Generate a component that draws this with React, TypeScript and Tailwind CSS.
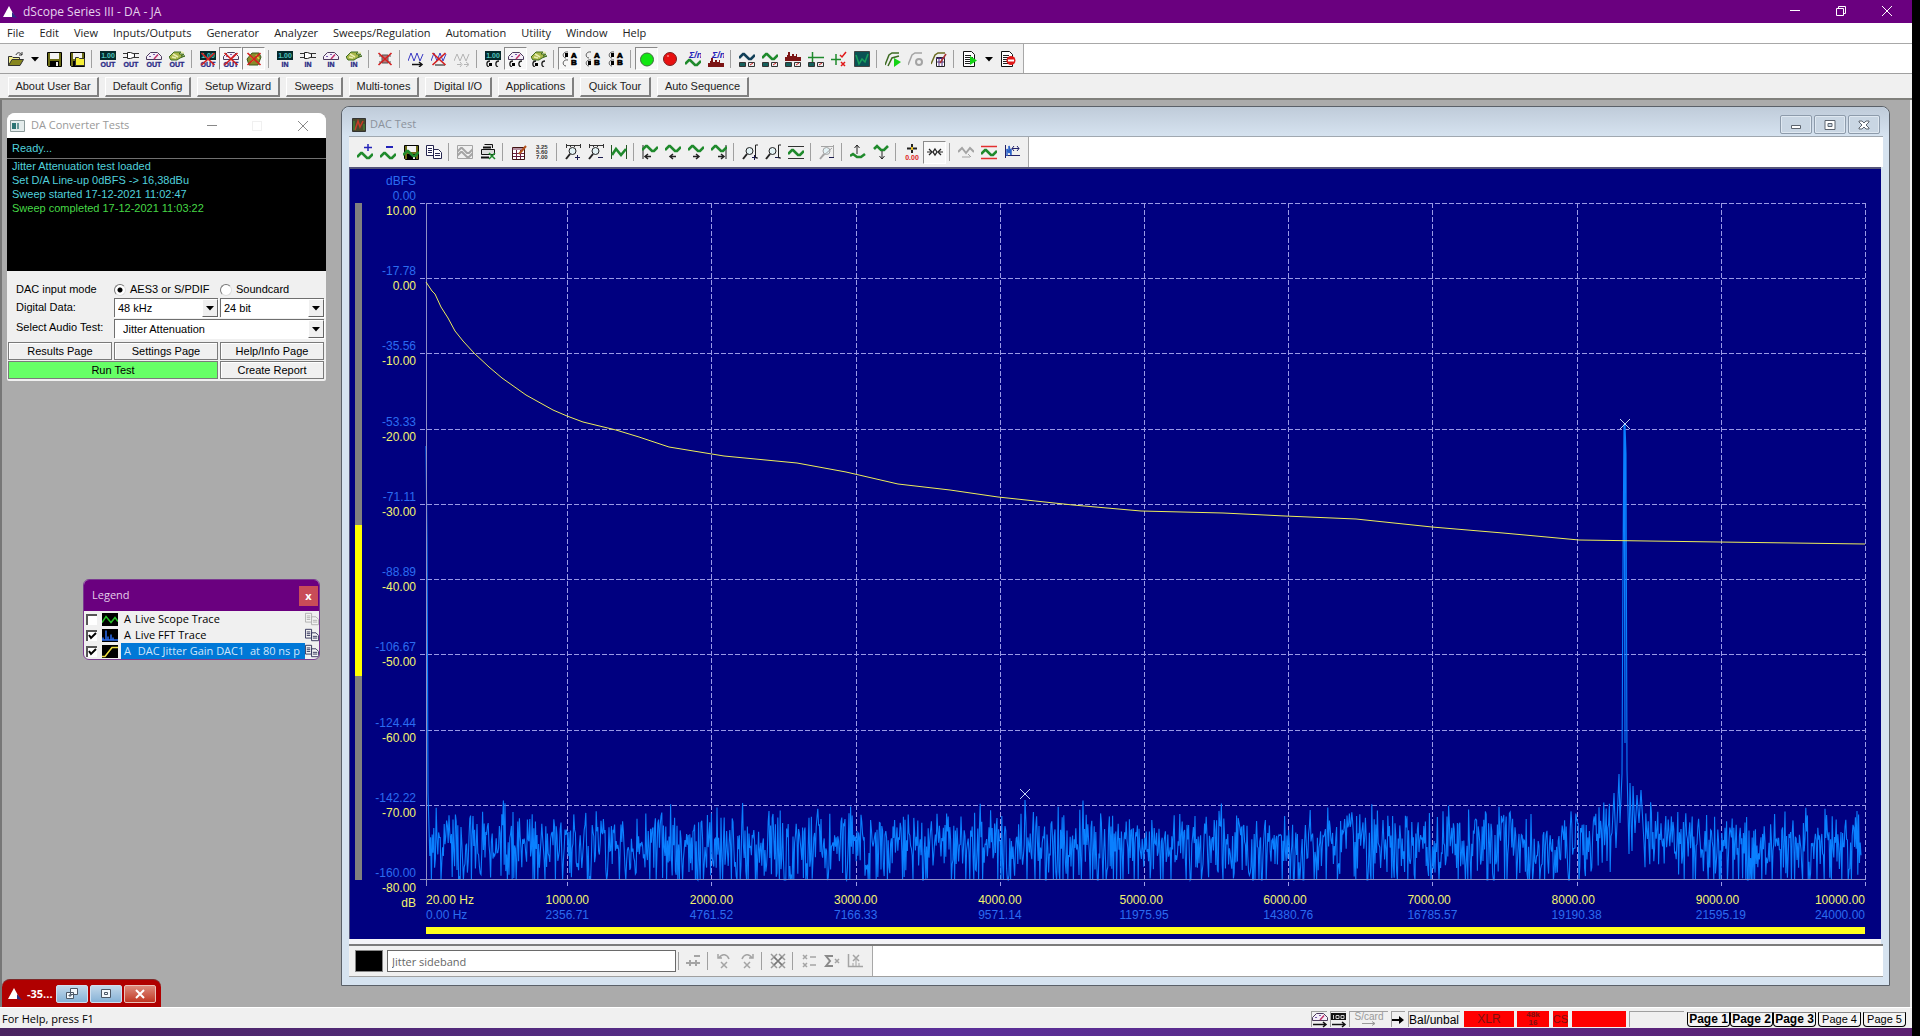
import type { ReactNode } from "react";
import clsx from "clsx";

type Tool = { label: string; icon: ReactNode; pressed?: boolean; narrow?: boolean };

const GREEN = "#1f8a2c";
const GREY = "#a4a4a4";

/* ---------- icon parts, all drawn on a 16 x 16 grid ---------- */

function Icon({ children }: { children: ReactNode }) {
  return (
    <svg viewBox="0 0 16 16" className="size-4 shrink-0" fill="none" aria-hidden="true">
      {children}
    </svg>
  );
}

function Wave({ y = 0, color = GREEN, width = 2.6 }: { y?: number; color?: string; width?: number }) {
  return <path d={`M0 ${10 + y}L4 ${6 + y}H5L10 ${11 + y}H12L16 ${7 + y}`} stroke={color} strokeWidth={width} />;
}

function Caption({ text }: { text: string }) {
  return (
    <text x="8" y="16" textAnchor="middle" fontSize="7" fontWeight="700" fontFamily="Liberation Sans" fill="#2a2a86" stroke="#2a2a86" strokeWidth=".3">
      {text}
    </text>
  );
}

function Display() {
  return (
    <>
      <path d="M0 0H16V9H0Z" fill="#04282a" />
      <text x="8" y="7" textAnchor="middle" fontSize="7" fontWeight="700" fontFamily="Liberation Sans" fill="#4fc4bd">
        1.00
      </text>
    </>
  );
}

function Plug() {
  return (
    <>
      <path d="M0 2.5H5M0 6.5H5M11 2.5H16M11 6.5H16" stroke="#333" />
      <path d="M4.5 1.5H7.5L11.5 3V6L7.5 7.5H4.5Z" fill="#fff" stroke="#222" />
    </>
  );
}

function Gauge() {
  return (
    <>
      <path d="M.5 8.5V5.5L4.5 1.5H11.5L15.5 5.5V8.5Z" fill="#f4eef8" stroke="#4b3a5c" />
      <path d="M8 8L12 3.5" stroke="#c0306a" strokeWidth="1.5" />
      <path d="M3 5.5H5M7 3.5H9" stroke="#7a5cb0" />
    </>
  );
}

function Speaker() {
  return (
    <>
      <path d="M0 6L5 1H12L10 3H15L12 5H16L11 7L8 9L2 9Z" fill="#a9b84a" stroke="#3d6a1e" />
      <path d="M4 3L9 6M3 6L7 7M12 1L15 2" stroke="#e8ecb0" strokeWidth="1.5" />
    </>
  );
}

function RedCross() {
  return <path d="M1.5 2L14.5 14M14.5 2L1.5 14" stroke="#d42020" strokeWidth="1.7" />;
}

function RadioPair() {
  return (
    <>
      <path d="M5 10C1 10 1 15 4 16M14 10C10 10 10 15 13 16" stroke="#222" strokeWidth="1.3" />
      <path d="M4 12H7V15H4Z" fill="#000" />
    </>
  );
}

function ChannelPick({ a, b }: { a: boolean; b: boolean }) {
  return (
    <>
      <path d="M6 1C0 0 0 7 4 7M6 9C0 8 0 15 4 15" stroke="#555" />
      {a && <path d="M3 2H6V6H3Z" fill="#000" />}
      {b && <path d="M3 10H6V14H3Z" fill="#000" />}
      <g fontSize="8" fontWeight="700" fontFamily="Liberation Sans" fill="#000" stroke="#000" strokeWidth=".7">
        <text x="9" y="7">A</text>
        <text x="9" y="14">B</text>
      </g>
    </>
  );
}

function SumN() {
  return (
    <text x="4" y="7" fontSize="9" fontWeight="700" fontStyle="italic" fontFamily="Liberation Sans" fill="#2222b8">
      Σ/n
    </text>
  );
}

function Spectrum({ y = 0 }: { y?: number }) {
  return (
    <path
      d={`M0 ${10 + y}V${6 + y}H2V${4 + y}H3V${1 + y}H5V${5 + y}H7V${3 + y}H9V${5 + y}H11V${3 + y}H12V${6 + y}H16V${10 + y}Z`}
      fill="#7c1414"
    />
  );
}

function Readouts() {
  return (
    <>
      <path d="M.5 11.5H6.5V15.5H.5Z" fill="#15605c" stroke="#333" />
      <path d="M9.5 11.5H15.5V15.5H9.5Z" fill="#eee" stroke="#333" />
      <path d="M11 14L14 12" stroke="#c22" />
    </>
  );
}

function Folder() {
  return (
    <>
      <path d="M.5 14.5V5.5H4L5 6.5H11.5V8.5" fill="#f1ee8e" stroke="#333" />
      <path d="M.5 14.5L4 8.5H15.5L12 14.5Z" fill="#87871f" stroke="#333" />
    </>
  );
}

function Floppy() {
  return (
    <>
      <path d="M1.5 1.5H15.5V15.5H2.5L1.5 14.5Z" fill="#6c6c16" stroke="#000" />
      <path d="M4 2H13V8H4Z" fill="#f4f4f4" />
      <path d="M4 10H13V15H4Z" fill="#000" />
      <path d="M10 11H12V15H10Z" fill="#eee" />
    </>
  );
}

function Sheet() {
  return (
    <>
      <path d="M1.5 .5H9.5L12.5 3.5V15.5H1.5Z" fill="#fff" stroke="#111" />
      <path d="M3 4.5H9M3 6.5H11M3 8.5H11M3 10.5H9M3 12.5H8" stroke="#222" />
    </>
  );
}

function Copy({ color = "#26264f", paper = "#fff" }: { color?: string; paper?: string }) {
  return (
    <>
      <path d="M.5 1.5H7.5V11.5H.5Z" fill={paper} stroke={color} />
      <path d="M7.5 5.5H12.5L15.5 8.5V14.5H7.5Z" fill={paper} stroke={color} />
      <path d="M2 4.5H6M2 6.5H6M2 8.5H6M9 9.5H14M9 11.5H14" stroke={color} />
    </>
  );
}

function Lens({ sign, color = "#222" }: { sign: "+" | "-"; color?: string }) {
  return (
    <>
      <circle cx="7.5" cy="7" r="3.5" fill="#e3f2f5" stroke={color} />
      <path d="M5 10L1 15" stroke={color} strokeWidth="2" />
      <path d={sign === "+" ? "M10 13.5H15M12.5 11V16" : "M10 13.5H15"} stroke="#1a1a4e" />
    </>
  );
}

function Arrow({ x, dir }: { x: number; dir: 1 | -1 }) {
  return (
    <path d={`M${x - 3 * dir} 12.5H${x + 3 * dir}M${x} 10L${x + 3 * dir} 12.5L${x} 15`} stroke="#222" strokeWidth="1.5" />
  );
}

function Cross({ x, y, s = 3, color = GREY }: { x: number; y: number; s?: number; color?: string }) {
  return <path d={`M${x - s} ${y - s}L${x + s} ${y + s}M${x + s} ${y - s}L${x - s} ${y + s}`} stroke={color} strokeWidth="1.5" />;
}

function Logo() {
  return (
    <svg viewBox="0 0 16 16" className="size-4 shrink-0" aria-hidden="true">
      <path d="M7 2L13 13H1Z" fill="#fff" />
      <path d="M10 8L15 14L10 13Z" fill="#2c2c86" />
    </svg>
  );
}

/* ---------- toolbars ---------- */

const mainTools: (Tool | null)[] = [
  { label: "Open", icon: <><Folder /><path d="M8 4C9 1 12 1 14 4M14 1V4H11" stroke="#333" /></> },
  { label: "Open recent", narrow: true, icon: <path d="M4 6H12L8 10.5Z" fill="#000" /> },
  { label: "Save", icon: <Floppy /> },
  { label: "Save as", icon: <><Floppy /><path d="M6.5 14.5V6.5H9.5L10.5 7.5H15.5V14.5Z" fill="#f5ee38" stroke="#333" /></> },
  null,
  { label: "Signal generator", icon: <><Display /><Caption text="OUT" /></> },
  { label: "Digital outputs", icon: <><Plug /><Caption text="OUT" /></> },
  { label: "Analogue outputs", icon: <><Gauge /><Caption text="OUT" /></> },
  { label: "Monitor outputs", icon: <><Speaker /><Caption text="OUT" /></> },
  null,
  { label: "Mute generator", icon: <><Display /><Caption text="OUT" /><RedCross /></> },
  { label: "Mute analogue outputs", pressed: true, icon: <><Gauge /><Caption text="OUT" /><RedCross /></> },
  { label: "Mute monitor", pressed: true, icon: <><path d="M1 8L6 2H13L15 6L12 14H3Z" fill="#8a8a2a" stroke="#3d5a1e" /><path d="M4 5L8 8L5 11M10 4L13 8" stroke="#e8d040" strokeWidth="1.5" /><RedCross /></> },
  null,
  { label: "Signal analyzer", icon: <><Display /><Caption text="IN" /></> },
  { label: "Digital inputs", icon: <><Plug /><Caption text="IN" /></> },
  { label: "Analogue inputs", icon: <><Gauge /><Caption text="IN" /></> },
  { label: "Monitor inputs", icon: <><Speaker /><Caption text="IN" /></> },
  null,
  { label: "Disconnect", icon: <><path d="M2 5H5M2 11H5M11 5H14M11 11H14" stroke="#555" /><path d="M5 4H11V12H5Z" fill="#b87878" stroke="#555" /><RedCross /></> },
  null,
  { label: "Sweep on", icon: <><path d="M0 10L3 2L6 10L9 2L12 10L15 3" stroke="#3a3ac4" /><path d="M4 13.5H14M11 11L14 13.5L11 16" stroke="#111" strokeWidth="1.5" /></> },
  { label: "Sweep off", icon: <><path d="M0 10L3 2L6 10L9 2L12 10L15 3" stroke="#3a3ac4" /><path d="M4 14H14" stroke="#111" /><RedCross /></> },
  { label: "Step sweep", icon: <path d="M0 10L3 3L6 10L9 3L12 10L15 3M3 13.5H7M10 13.5H14M6 11L8 13.5L6 16M12 11L15 13.5L12 16" stroke="#b4b4b4" /> },
  null,
  { label: "Generator source", icon: <><Display /><RadioPair /></> },
  { label: "Analogue source", pressed: true, icon: <><Gauge /><RadioPair /></> },
  { label: "Monitor source", icon: <><Speaker /><RadioPair /></> },
  null,
  { label: "Channel A", pressed: true, icon: <ChannelPick a b={false} /> },
  { label: "Channel B", icon: <ChannelPick a={false} b /> },
  { label: "Channels A and B", icon: <ChannelPick a b /> },
  null,
  { label: "Run", pressed: true, icon: <circle cx="8" cy="8.5" r="6.5" fill="#12e712" stroke="#3c6e3c" /> },
  { label: "Stop", icon: <><circle cx="8" cy="8" r="6.5" fill="#e81010" stroke="#7b2020" /><path d="M5 5H7" stroke="#fbb" /></> },
  { label: "Average scope", icon: <><SumN /><Wave y={3} /></> },
  { label: "Average FFT", icon: <><SumN /><Spectrum y={6} /></> },
  null,
  { label: "Continuous-time detector", icon: <><Wave y={-3} color="#123f58" /><Readouts /></> },
  { label: "Scope detector", icon: <><Wave y={-3} /><Readouts /></> },
  { label: "FFT detector", icon: <><Spectrum /><Readouts /></> },
  { label: "Impulse response", icon: <><path d="M0 6.5H16M4.5 1V11" stroke={GREEN} strokeWidth="1.5" /><Readouts /></> },
  { label: "Limit checks", icon: <><path d="M0 8.5H10M5 3V14" stroke={GREEN} strokeWidth="1.5" /><path d="M9 4L11 6L15 1" stroke="#e01818" strokeWidth="1.5" /><Cross x={12} y={13} s={2} color="#e01818" /></> },
  { label: "Graph", icon: <><path d="M.5 .5H15.5V15.5H.5Z" fill="#0a5254" stroke="#444" /><path d="M2 4L5 13L8 8L11 11L14 3" stroke="#19a05c" strokeWidth="1.5" /></> },
  null,
  { label: "Run script", icon: <><path d="M0 14L4 4L7 2H14M3 15L7 7L14 5" stroke="#3d6b22" strokeWidth="1.5" /><path d="M9 7L16 11L9 16Z" fill="#14d314" /></> },
  { label: "Record script", icon: <><path d="M0 14L4 4L7 2H14" stroke={GREY} strokeWidth="1.5" /><circle cx="11" cy="11" r="3" stroke={GREY} strokeWidth="2" /></> },
  { label: "Edit script", icon: <><path d="M0 13L4 4L7 2H14" stroke="#6b6b22" strokeWidth="1.5" /><path d="M5.5 6.5H13.5V15.5H5.5Z" fill="#fff" stroke="#222" /><path d="M5 7.5H14M8 6V15M11 6V15M6 11H13" stroke="#4a2a7a" /><path d="M9 12L15 3" stroke="#a33" strokeWidth="1.5" /></> },
  null,
  { label: "Run report", icon: <><Sheet /><path d="M8 5L15 9.5L8 14Z" fill="#14d314" /></> },
  { label: "Recent reports", narrow: true, icon: <path d="M4 6H12L8 10.5Z" fill="#000" /> },
  { label: "Stop report", icon: <><Sheet /><circle cx="11" cy="9.5" r="4.5" fill="#e01818" /><path d="M8 9.5H14" stroke="#fff" strokeWidth="2" /></> },
];

const graphTools: (Tool | null)[] = [
  { label: "Add trace", icon: <><Wave y={3} /><path d="M7 3.5H15M11 0V7" stroke="#2222b8" strokeWidth="1.5" /></> },
  { label: "Remove trace", icon: <><Wave y={3} /><path d="M6 3H13" stroke="#2222b8" strokeWidth="2" /></> },
  { label: "Save trace", icon: <><Floppy /><Wave y={1} /></> },
  { label: "Copy graph", icon: <Copy /> },
  null,
  { label: "Trace style", icon: <><path d="M.5 1.5H15.5V14.5H.5Z" stroke={GREY} /><Wave y={-2} color={GREY} width={2} /><Wave y={2} color={GREY} width={2} /></> },
  { label: "Print graph", icon: <><path d="M4.5 .5H12.5V4M1.5 5.5H14.5V10.5H1.5Z" fill="#ddd" stroke="#111" /><path d="M3 3.5H11M1 13.5H9" stroke="#111" strokeWidth="2" /><Cross x={12} y={12} color={GREEN} /></> },
  null,
  { label: "Trace settings", icon: <><path d="M1.5 3.5H13.5V15.5H1.5Z" fill="#fff" stroke="#401414" /><path d="M1 5H14M5.5 6V15M9.5 6V15M2 9.5H13M2 12.5H13" stroke="#6a2040" /><path d="M8 10L15 2" stroke="#b4541e" strokeWidth="2" /></> },
  { label: "Values", icon: <g fontSize="6" fontWeight="700" fontFamily="Liberation Sans" fill="#333"><text x="2" y="5">3.25</text><text x="2" y="10">5.60</text><text x="2" y="15">7.00</text></g> },
  null,
  { label: "Zoom in X", icon: <><path d="M1 1.5H16M1.5 0V4M5.5 1V3M9.5 1V3M15.5 0V4" stroke="#333" /><Lens sign="+" /></> },
  { label: "Zoom out X", icon: <><path d="M1 1.5H16M1.5 0V4M5.5 1V3M9.5 1V3M15.5 0V4" stroke="#333" /><Lens sign="-" /></> },
  { label: "Fit X", icon: <><path d="M.5 1V15M15.5 1V15" stroke="#235423" /><path d="M1 11L5 5L10 11L15 5" stroke={GREEN} strokeWidth="2.6" /></> },
  null,
  { label: "Scroll to start", icon: <><path d="M1 1V15" stroke="#222" /><Wave y={-4} /><Arrow x={6} dir={-1} /></> },
  { label: "Scroll left", icon: <><Wave y={-4} /><Arrow x={8} dir={-1} /></> },
  { label: "Scroll right", icon: <><Wave y={-4} /><Arrow x={8} dir={1} /></> },
  { label: "Scroll to end", icon: <><path d="M15 1V15" stroke="#222" /><Wave y={-4} /><Arrow x={10} dir={1} /></> },
  null,
  { label: "Zoom in Y", icon: <><Lens sign="+" /><path d="M16 1H13.5V14H16" stroke="#222" /></> },
  { label: "Zoom out Y", icon: <><Lens sign="-" /><path d="M16 1H13.5V14H16" stroke="#222" /></> },
  { label: "Fit Y", icon: <><path d="M0 2.5H16M0 14.5H16" stroke="#333" /><Wave /></> },
  null,
  { label: "Auto scale", icon: <><path d="M2 2.5H14M14.5 1V14" stroke={GREY} /><Lens sign="-" color={GREY} /><path d="M3 13L13 4" stroke={GREY} /></> },
  null,
  { label: "Scroll up", icon: <><path d="M0 12L3 10L7 13H11L15 10" stroke={GREEN} strokeWidth="2.6" /><path d="M7 10V1M4.5 4L7 1L9.5 4" stroke="#222" /></> },
  { label: "Scroll down", icon: <><path d="M1 5L4 2L8 6H11L15 2" stroke={GREEN} strokeWidth="2.6" /><path d="M9 7V15M6.5 12L9 15L11.5 12" stroke="#222" /></> },
  null,
  { label: "Cursor values", icon: <><path d="M8 0V9M3 4.5H13" stroke="#222" strokeWidth="2" /><path d="M7 3H9V6H7Z" fill="#e8c020" /><text x="8" y="16" textAnchor="middle" fontSize="7" fontWeight="700" fontFamily="Liberation Sans" fill="#d22">0.00</text></> },
  { label: "Marks", pressed: true, icon: <><path d="M2 5L5 8L2 11M14 5L11 8L14 11" stroke="#222" strokeWidth="1.3" /><path d="M8 5L10 8L8 11L6 8Z" stroke="#222" strokeWidth="1.3" /><path d="M0 8H5M11 8H16" stroke="#222" /></> },
  null,
  { label: "Shift trace", icon: <><path d="M0 8L4 4L8 9L12 4L16 8" stroke={GREY} strokeWidth="2" /><path d="M4 13H12M10 10L13 13" stroke={GREY} /></> },
  { label: "Limits", icon: <><path d="M0 2.5H16M0 14.5H16" stroke="#e23030" strokeWidth="1.5" /><Wave /></> },
  { label: "Linked axes", icon: <><path d="M1.5 1V14M1 11.5H16" stroke="#22226a" /><path d="M3 12V5L5 9V2L7 11V5" stroke="#2a62c8" strokeWidth="1.5" /><path d="M8 4.5H15M10 2L8 4.5L10 7M13 2L15 4.5L13 7" stroke="#22226a" /></> },
];

const markTools: (Tool | null)[] = [
  { label: "Add mark", icon: <><path d="M1 10H15M5 7V13M11 7V13M9 3H15" stroke={GREY} strokeWidth="2" /></> },
  null,
  { label: "Previous mark", icon: <><path d="M3 5C6 0 11 1 13 6M2 1V5H6" stroke={GREY} strokeWidth="1.5" /><Cross x={8} y={12} /></> },
  { label: "Next mark", icon: <><path d="M13 5C10 0 5 1 3 6M14 1V5H10" stroke={GREY} strokeWidth="1.5" /><Cross x={8} y={12} /></> },
  null,
  { label: "Delete all marks", icon: <><Cross x={4} y={4} color="#999" /><Cross x={12} y={4} color="#999" /><Cross x={4} y={12} color="#999" /><Cross x={12} y={12} color="#999" /><Cross x={8} y={8} s={4} color="#777" /></> },
  null,
  { label: "Mark list", icon: <><Cross x={4} y={4} s={2} /><Cross x={4} y={12} s={2} /><path d="M9 4H15M9 12H15" stroke={GREY} strokeWidth="1.5" /></> },
  { label: "Sum of marks", icon: <><path d="M9 3H2L6 8L2 13H9" stroke="#8a8a8a" strokeWidth="2" /><Cross x={13} y={8} s={2} /></> },
  { label: "Mark harmonics", icon: <><path d="M1.5 1V13.5H16" stroke={GREY} strokeWidth="1.5" /><Cross x={9} y={5} /><path d="M9 5V13M6 10V13M12 10V13" stroke={GREY} /></> },
];

function Toolbar({ tools, label }: { tools: (Tool | null)[]; label: string }) {
  return (
    <div role="toolbar" aria-label={label} className="flex items-center">
      {tools.map((tool, i) =>
        tool ? (
          <button
            key={tool.label}
            type="button"
            aria-label={tool.label}
            aria-pressed={tool.pressed}
            className={clsx(
              "flex h-[23px] shrink-0 items-center justify-center",
              tool.narrow ? "w-[15px]" : "w-[23px]",
              tool.pressed && "border border-t-[#8a8a8a] border-r-white border-b-white border-l-[#8a8a8a] bg-[#f8f8f8]",
            )}
          >
            <Icon>{tool.icon}</Icon>
          </button>
        ) : (
          <span key={i} className="mr-1 ml-[3px] h-[18px] w-px shrink-0 bg-[#a0a0a0]" />
        ),
      )}
    </div>
  );
}

/* ---------- chart data ---------- */

const PLOT_W = 1439;
const PLOT_H = 677;

const yTicks = [
  ["0.00", "10.00"],
  ["-17.78", "0.00"],
  ["-35.56", "-10.00"],
  ["-53.33", "-20.00"],
  ["-71.11", "-30.00"],
  ["-88.89", "-40.00"],
  ["-106.67", "-50.00"],
  ["-124.44", "-60.00"],
  ["-142.22", "-70.00"],
  ["-160.00", "-80.00"],
];

const xTicks = [
  ["1000.00", "2356.71"],
  ["2000.00", "4761.52"],
  ["3000.00", "7166.33"],
  ["4000.00", "9571.14"],
  ["5000.00", "11975.95"],
  ["6000.00", "14380.76"],
  ["7000.00", "16785.57"],
  ["8000.00", "19190.38"],
  ["9000.00", "21595.19"],
  ["10000.00", "24000.00"],
];

const jitterGain =
  "0,79 6,88 9,91 15,104 22,115 29,128 37,138 48,150 63,164 76,175 100,192 127,207 141,213 157,219 190,227 213,234 243,244 298,253 371,260 420,269 472,281 524,287 572,294 647,302 715,308 797,310 859,313 930,316 1006,324 1077,330 1153,337 1222,338 1293,339 1439,341";

// Main tone and its skirt, drawn by hand between the two noise stretches.
const tone = [
  [1186, 630], [1188, 590], [1190, 645], [1193, 571], [1194, 620], [1196, 571], [1197, 359], [1198, 221],
  [1199, 540], [1199, 221], [1200, 251], [1201, 567], [1203, 651], [1204, 580], [1206, 648], [1207, 583],
  [1209, 630], [1211, 592], [1213, 620], [1215, 587], [1218, 640],
];

// Noise floor: exponentially distributed bin power on a dB scale, fixed seed.
function fftTrace() {
  let seed = 90210;
  const random = () => {
    seed = (seed * 1664525 + 1013904223) % 4294967296;
    return (seed + 1) / 4294967297;
  };
  const noise = (from: number, to: number) => {
    const points: string[] = [];
    for (let x = from; x < to; x += 0.8) {
      const near = Math.abs(x - 1199);
      const lift = near < 40 ? (40 - near) * 0.4 : 0;
      const db = 10 * Math.log10(-Math.log(random()));
      const y = Math.min(PLOT_H, Math.max(597, 635 - lift - db * 4.6));
      points.push(`${x.toFixed(1)},${y.toFixed(1)}`);
    }
    return points;
  };
  return [
    "0,243",
    "1,340",
    "2,590",
    ...noise(3, 599),
    "599,597",
    "600,620",
    ...noise(601, 1185),
    ...tone.map((point) => point.join(",")),
    ...noise(1219, PLOT_W - 4),
  ].join(" ");
}

const fft = fftTrace();

function Chart() {
  return (
    <div className="flex min-h-0 flex-1 border-t-2 border-l border-[#55557a] bg-[#000080] pb-[5px] font-['Liberation_Sans',Arial,sans-serif] text-xs leading-[15px]">
      <div className="mt-[34px] mb-[54px] ml-[5px] flex w-[7px] flex-col bg-[#808080]">
        <div className="flex-[322]" />
        <div className="flex-[151] bg-[#ffff00]" />
        <div className="flex-[204]" />
      </div>
      <div className="mt-[5px] mb-[23px] flex w-[54px] flex-col text-right">
        <div className="text-[#2b6cf0]">dBFS</div>
        <div className="flex flex-1 flex-col justify-between">
          {yTicks.map(([fs, db]) => (
            <div key={fs}>
              <div className="text-[#2b6cf0]">{fs}</div>
              <div className="text-[#f3f36e]">{db}</div>
            </div>
          ))}
        </div>
        <div className="text-[#f3f36e]">dB</div>
      </div>
      <div className="mr-4 ml-2.5 flex min-w-0 flex-1 flex-col pt-[34px]">
        <svg
          viewBox={`0 0 ${PLOT_W} ${PLOT_H}`}
          preserveAspectRatio="none"
          className="min-h-0 w-full flex-1 overflow-visible"
          fill="none"
          role="img"
          aria-label="FFT trace and jitter gain"
        >
          <g stroke="#9a9ae6" strokeDasharray="5 2" shapeRendering="crispEdges">
            {yTicks.slice(0, 9).map(([fs], i) => (
              <path key={fs} d={`M-6 ${Math.round((i * PLOT_H) / 9) + 0.5}H${PLOT_W}`} />
            ))}
            {xTicks.map(([hz], i) => (
              <path key={hz} d={`M${Math.round(((i * 1000 + 980) / 9980) * PLOT_W) + 0.5} 0V${PLOT_H + 6}`} />
            ))}
          </g>
          <polyline points={fft} stroke="#0a80ff" strokeWidth="1.1" />
          <path d={`M.5 0V${PLOT_H + 6}M-6 ${PLOT_H - 0.5}H${PLOT_W}`} stroke="#8f8fc4" />
          <polyline points={jitterGain} stroke="#ecec5a" />
          <path d="M1194 216L1204 226M1204 216L1194 226M594 586L604 596M604 586L594 596" stroke="#c4d4f4" />
        </svg>
        <div className="grid grid-cols-[980fr_repeat(9,1000fr)] pt-[13px]">
          {xTicks.map(([hz, fftHz], i) => (
            <div key={hz} className="flex min-w-0 justify-between">
              <div className="w-0 whitespace-nowrap">
                {i === 0 && (
                  <>
                    <div className="text-[#f3f36e]">20.00 Hz</div>
                    <div className="text-[#2b6cf0]">0.00 Hz</div>
                  </>
                )}
              </div>
              <div className={clsx("flex w-0 whitespace-nowrap", i === 9 ? "justify-end" : "justify-center")}>
                <div>
                  <div className="text-[#f3f36e]">{hz}</div>
                  <div className="text-[#2b6cf0]">{fftHz}</div>
                </div>
              </div>
            </div>
          ))}
        </div>
        <div className="mt-1 h-[7px] bg-[#ffff1e]" />
      </div>
    </div>
  );
}

/* ---------- windows ---------- */

function DacButton({ label, children }: { label: string; children: ReactNode }) {
  return (
    <button
      type="button"
      aria-label={label}
      className="flex h-[19px] w-8 items-center justify-center rounded-xs border border-[#8d9bab] bg-[#c9d6e3] shadow-[inset_0_0_0_1px_#dfe8f1]"
    >
      <svg viewBox="0 0 12 12" className="size-3" fill="#fff" stroke="#5c646e" aria-hidden="true">
        {children}
      </svg>
    </button>
  );
}

function DacWindow() {
  return (
    <section
      aria-label="DAC Test"
      className="mt-1.5 mr-5 mb-[21px] flex min-w-0 flex-1 flex-col rounded-t-lg border border-[#5a6068] bg-[#d6e3f0] pr-2 pb-2 pl-[7px]"
    >
      <header className="-mr-2 -ml-[7px] flex h-[29px] items-center gap-1 rounded-t-lg bg-linear-to-b from-[#bfcbd9] to-[#d6e3f0] pt-1.5 pr-[9px] pl-2.5">
        <svg viewBox="0 0 14 14" className="size-3.5" fill="none" aria-hidden="true">
          <path d="M.5 .5H13.5V13.5H.5Z" fill="#4a4a2c" stroke="#333" />
          <path d="M3 12L6 3L8 9L11 3" stroke="#c83c28" strokeWidth="1.5" />
          <path d="M2 3V12M12 6V12" stroke="#3c9a3c" />
        </svg>
        <h2 className="flex-1 text-[11px] text-[#8b929c]">DAC Test</h2>
        <div className="flex gap-0.5">
          <DacButton label="Minimize graph">
            <path d="M1.5 6.5H10.5V9.5H1.5Z" />
          </DacButton>
          <DacButton label="Maximize graph">
            <path d="M1 1.5H11V10.5H1ZM4 4.5H8V7.5H4Z" fillRule="evenodd" />
          </DacButton>
          <DacButton label="Close graph">
            <path d="M1 2H4L6 4L8 2H11V3L8 6L11 9V10H8L6 8L4 10H1V9L4 6L1 3Z" />
          </DacButton>
        </div>
      </header>
      <div className="-mr-0.5 flex h-[31px] border-t border-[#a0a8b0] bg-white">
        <div className="flex items-center border-r border-[#a8a8a8] bg-[#f0f0f0] pr-[5px] pl-1">
          <Toolbar tools={graphTools} label="Graph tools" />
        </div>
      </div>
      <Chart />
      <div className="h-[5px] bg-[#f4f4f8]" />
      <div className="-mr-0.5 flex h-[33px] border-t-2 border-b border-t-[#7c7c7c] border-b-[#a0a0a0] bg-white">
        <div className="flex items-center border-r border-[#a8a8a8] bg-[#f0f0f0] pr-1.5 pl-1.5">
          <div className="mr-1 h-[22px] w-7 border border-[#888] bg-black" />
          <input
            aria-label="Mark description"
            defaultValue="Jitter sideband"
            className="mr-0.5 h-[22px] w-[289px] border border-[#6a6a6a] bg-white px-1 text-[11px] text-[#666]"
          />
          <span className="mr-0.5 h-[18px] w-px bg-[#a0a0a0]" />
          <Toolbar tools={markTools} label="Mark tools" />
        </div>
      </div>
    </section>
  );
}

function Combo({ label, options, indent }: { label: string; options: string[]; indent?: boolean }) {
  return (
    <div className="relative min-w-0 border-t border-l border-[#6f6f6f] bg-white shadow-[1px_1px_0_#fff]">
      <select
        aria-label={label}
        className={clsx("block h-[18px] w-full appearance-none bg-white text-[11px]", indent ? "pl-2" : "pl-[3px]")}
      >
        {options.map((option) => (
          <option key={option}>{option}</option>
        ))}
      </select>
      <span className="pointer-events-none absolute top-0 right-0 flex h-[18px] w-4 items-center justify-center border border-t-white border-r-[#666] border-b-[#666] border-l-white bg-[#f0f0f0]">
        <svg viewBox="0 0 8 5" className="h-[5px] w-2" aria-hidden="true">
          <path d="M0 0H8L4 4.5Z" />
        </svg>
      </span>
    </div>
  );
}

const classicButton = "h-[18px] border border-[#7a7a7a] bg-[#f0f0f0] text-center leading-4 shadow-[inset_1px_1px_0_#fff]";
const classicRadio =
  "size-3 appearance-none rounded-full border border-t-[#777] border-l-[#777] border-r-[#ddd] border-b-[#ddd] bg-white checked:bg-[radial-gradient(#000_2px,#fff_3px)]";

function ConverterTests() {
  return (
    <section
      aria-label="DA Converter Tests"
      className="ml-[5px] w-[319px] overflow-hidden rounded-t-lg rounded-b-xs bg-[#f0f0f0] font-['Liberation_Sans',Arial,sans-serif] text-[11px] text-black"
    >
      <header className="flex h-[25px] items-center bg-white pl-[3px] font-['Open_Sans',sans-serif]">
        <svg viewBox="0 0 15 12" className="h-3 w-[15px]" aria-hidden="true">
          <path d="M.5 .5H14.5V11.5H.5Z" fill="#e4ecec" stroke="#8a9a9a" />
          <path d="M2 3H6V9H2Z" fill="#2c7474" />
          <path d="M7 3H9V9H7Z" fill="#6a9a9a" />
        </svg>
        <h2 className="ml-1.5 flex-1 text-[11px] text-[#999]">DA Converter Tests</h2>
        <button type="button" aria-label="Minimize tests" className="flex h-6 w-[45px] items-center justify-center">
          <span className="h-px w-2.5 bg-[#888]" />
        </button>
        <button type="button" aria-label="Maximize tests" className="flex h-6 w-[45px] items-center justify-center">
          <span className="size-2.5 border border-[#f0f0f0]" />
        </button>
        <button type="button" aria-label="Close tests" className="flex h-6 w-[47px] items-center justify-center">
          <svg viewBox="0 0 10 10" className="size-2.5" stroke="#888" aria-hidden="true">
            <path d="M0 0L10 10M10 0L0 10" />
          </svg>
        </button>
      </header>
      <div className="h-[133px] bg-black leading-[14px] text-[#50d0dc]">
        <p className="h-[21px] border-b border-[#707070] pt-[3px] pl-[5px]">Ready...</p>
        <div className="pl-[5px]">
          <p>Jitter Attenuation test loaded</p>
          <p>Set D/A Line-up 0dBFS -&gt; 16,38dBu</p>
          <p>Sweep started 17-12-2021 11:02:47</p>
          <p className="text-[#46d846]">Sweep completed 17-12-2021 11:03:22</p>
        </div>
      </div>
      <div className="pt-2.5 pr-0.5 pb-0.5 pl-px">
        <div className="grid grid-cols-[98px_1fr] items-center pl-2">
          <span className="leading-[17px]">DAC input mode</span>
          <div role="radiogroup" aria-label="DAC input mode" className="flex items-center">
            <label className="flex w-[106px] items-center gap-1 whitespace-nowrap">
              <input type="radio" name="dac-input" defaultChecked className={classicRadio} />
              AES3 or S/PDIF
            </label>
            <label className="flex items-center gap-1">
              <input type="radio" name="dac-input" className={classicRadio} />
              Soundcard
            </label>
          </div>
          <span className="leading-[17px]">Digital Data:</span>
          <div className="grid grid-cols-2 gap-0.5">
            <Combo label="Sample rate" options={["48 kHz", "96 kHz"]} />
            <Combo label="Word length" options={["24 bit", "16 bit"]} />
          </div>
          <span className="leading-[17px]">Select Audio Test:</span>
          <div className="mt-0.5">
            <Combo label="Select Audio Test" options={["Jitter Attenuation"]} indent />
          </div>
        </div>
        <div className="mt-1 grid grid-cols-3 gap-x-0.5 gap-y-px">
          <button type="button" className={classicButton}>Results Page</button>
          <button type="button" className={classicButton}>Settings Page</button>
          <button type="button" className={classicButton}>Help/Info Page</button>
          <button type="button" className="col-span-2 h-[18px] border border-[#7a7a7a] bg-[#66ff66] text-center leading-4">
            Run Test
          </button>
          <button type="button" className={classicButton}>Create Report</button>
        </div>
      </div>
    </section>
  );
}

const legendRows = [
  { name: "Live Scope Trace", checked: false, color: "#28c028", path: "M0 9L4 3L9 9L13 4L16 8", copy: "#aaa" },
  { name: "Live FFT Trace", checked: true, color: "#2a6cf0", path: "M1 11V8M4 11V1M6 11V7M9 11V5M11 11V8M0 10.5H16", copy: "#26264f" },
  { name: " DAC Jitter Gain DAC1  at 80 ns p", checked: true, color: "#f0e040", path: "M0 11H3L10 2H16", copy: "#26264f" },
];

function Legend() {
  return (
    <section aria-label="Legend" className="mt-[198px] ml-[81px] w-[237px] overflow-hidden rounded-md border border-[#7a3a90] bg-[#f0f0f0]">
      <header className="flex h-[31px] items-center justify-between bg-[#6a007f] pl-2">
        <h2 className="text-[11px] text-[#e4cdea]">Legend</h2>
        <button type="button" aria-label="Close legend" className="mr-px h-5 w-[19px] bg-[#c84c58] text-[11px] leading-4 font-bold text-white">
          x
        </button>
      </header>
      <ul className="text-[11px] leading-4 text-black">
        {legendRows.map((row, i) => (
          <li key={row.name} className="flex h-4 items-center">
            <label className="flex min-w-0 flex-1 items-center">
              <span className="ml-0.5 grid">
                <input
                  type="checkbox"
                  defaultChecked={row.checked}
                  className="peer col-start-1 row-start-1 size-[11px] appearance-none border-t-2 border-l-2 border-[#555] bg-white"
                />
                <svg viewBox="0 0 11 11" className="pointer-events-none col-start-1 row-start-1 hidden size-[11px] peer-checked:block" fill="none" aria-hidden="true">
                  <path d="M3 5L5 8L10 3" stroke="#000" strokeWidth="2" />
                </svg>
              </span>
              <svg viewBox="0 0 16 12" className="mr-[3px] ml-[5px] h-[13px] w-4 shrink-0 bg-black" fill="none" aria-hidden="true">
                <path d={row.path} stroke={row.color} strokeWidth="1.5" />
              </svg>
              <span className={clsx("flex min-w-0 flex-1 gap-1 pl-[3px] whitespace-pre", i === 2 && "bg-[#0078d7] text-[#cfe6fa]")}>
                <span>A</span>
                <span>{row.name}</span>
              </span>
            </label>
            <button type="button" aria-label={`Copy ${row.name.trim()}`} className="flex w-3.5 justify-center">
              <svg viewBox="0 0 16 16" className="size-3.5" fill="none" aria-hidden="true">
                <Copy color={row.copy} paper="#f4f4f4" />
              </svg>
            </button>
          </li>
        ))}
      </ul>
    </section>
  );
}

function MinimizedWindow() {
  const glass = "flex h-[18px] w-8 items-center justify-center rounded-xs border border-[#cfe0f0] bg-linear-to-b from-[#c2d8ea] to-[#86b2d6]";
  return (
    <section aria-label="Reading" className="mt-auto flex h-[28px] w-[159px] items-center rounded-t-lg border-t border-[#7c2a2a] bg-[#b00000] pt-px pl-[5px] text-white">
      <Logo />
      <span className="ml-1 flex-1 text-[11px] font-bold">-35...</span>
      <div className="mr-[5px] flex gap-0.5">
        <button type="button" aria-label="Restore reading" className={glass}>
          <svg viewBox="0 0 12 12" className="size-3" fill="#f4f8fc" stroke="#4c5866" aria-hidden="true">
            <path d="M4.5 .5H11.5V6.5H4.5ZM.5 4.5H7.5V10.5H.5ZM3 7H5V8H3Z" />
          </svg>
        </button>
        <button type="button" aria-label="Maximize reading" className={glass}>
          <svg viewBox="0 0 12 12" className="size-3" fill="#f4f8fc" stroke="#4c5866" aria-hidden="true">
            <path d="M1.5 1.5H10.5V9.5H1.5ZM4.5 4.5H7.5V6.5H4.5Z" />
          </svg>
        </button>
        <button
          type="button"
          aria-label="Close reading"
          className="flex h-[18px] w-8 items-center justify-center rounded-xs border border-[#eac0b8] bg-linear-to-b from-[#dc8a7c] to-[#c03420]"
        >
          <svg viewBox="0 0 10 10" className="size-2.5" stroke="#fff" strokeWidth="2" aria-hidden="true">
            <path d="M1 1L9 9M9 1L1 9" />
          </svg>
        </button>
      </div>
    </section>
  );
}

/* ---------- frame ---------- */

const menus = ["File", "Edit", "View", "Inputs/Outputs", "Generator", "Analyzer", "Sweeps/Regulation", "Automation", "Utility", "Window", "Help"];

const userBar = [
  { label: "About User Bar", width: "w-[91px]" },
  { label: "Default Config", width: "w-[86px]" },
  { label: "Setup Wizard", width: "w-[83px]" },
  { label: "Sweeps", width: "w-[57px]" },
  { label: "Multi-tones", width: "w-[70px]" },
  { label: "Digital I/O", width: "w-[67px]" },
  { label: "Applications", width: "w-[76px]" },
  { label: "Quick Tour", width: "w-[71px]" },
  { label: "Auto Sequence", width: "w-[92px]" },
];

function TitleBar() {
  const control = "flex h-[23px] w-[46px] items-center justify-center pb-0.5";
  return (
    <header className="flex h-[23px] items-center bg-[#6a007f] pl-0.5">
      <Logo />
      <h1 className="ml-[5px] flex-1 text-xs text-[#e6d2ec]">dScope Series III - DA - JA</h1>
      <button type="button" aria-label="Minimize" className={control}>
        <span className="h-px w-2.5 bg-white" />
      </button>
      <button type="button" aria-label="Restore" className={control}>
        <svg viewBox="0 0 10 10" className="size-2.5" fill="none" stroke="#fff" aria-hidden="true">
          <path d="M.5 2.5H7.5V9.5H.5ZM2.5 2V.5H9.5V7.5H8" />
        </svg>
      </button>
      <button type="button" aria-label="Close" className={clsx(control, "mr-0.5")}>
        <svg viewBox="0 0 10 10" className="size-2.5" stroke="#fff" aria-hidden="true">
          <path d="M0 0L10 10M10 0L0 10" />
        </svg>
      </button>
    </header>
  );
}

function StatusBar() {
  const cell = "h-4 border-t border-l border-[#a0a0a0]";
  const alarm = "flex h-4 items-center justify-center overflow-hidden bg-[#ff0000] text-[#7c1010]";
  const tab = "h-[15px] rounded-b-sm border border-black border-t-[#888] bg-[#f4f4f4] text-center leading-[13px] whitespace-nowrap";
  return (
    <footer className="flex h-[21px] items-center border-t border-white bg-[#f0f0f0] pt-0.5 pr-1.5 pl-0.5 text-xs text-black">
      <span className="flex-1 text-[11px]">For Help, press F1</span>
      <div className="flex items-center font-['Liberation_Sans',Arial,sans-serif]">
        <span className={clsx(cell, "mr-[3px] w-4")}>
          <Icon>
            <Gauge />
            <path d="M1 12.5H14M11 10L14 12.5L11 15" stroke="#111" strokeWidth="1.5" />
          </Icon>
        </span>
        <span className={clsx(cell, "mr-[3px] w-4")}>
          <Icon>
            <path d="M0 1H15V8H0Z" fill="#111" />
            <path d="M2.5 3V7M5 3.5H8V6.5H5ZM10 3.5H13V6.5H10Z" stroke="#ccc" />
            <path d="M1 12.5H14M11 10L14 12.5L11 15" stroke="#111" strokeWidth="1.5" />
          </Icon>
        </span>
        <span className={clsx(cell, "mr-[3px] flex w-[39px] flex-col items-center text-[10px] leading-[9px] text-[#999]")}>
          S/card
          <svg viewBox="0 0 14 5" className="h-[5px] w-3.5" stroke="#999" fill="none" aria-hidden="true">
            <path d="M0 2.5H13M10 .5L13 2.5L10 4.5" />
          </svg>
        </span>
        <span className={clsx(cell, "mr-[3px] flex w-3.5 items-center")}>
          <svg viewBox="0 0 12 8" className="h-2 w-3" aria-hidden="true">
            <path d="M0 3H7V0L12 4L7 8V5H0Z" />
          </svg>
        </span>
        <span className={clsx(cell, "mr-1 w-[52px] leading-4")}>Bal/unbal</span>
        <span className={clsx(alarm, "mr-[3px] w-[50px]")}>XLR</span>
        <span className={clsx(alarm, "mr-1 w-8 flex-col text-[8px] leading-[8px] font-bold")}>
          <span>48k</span>
          <span>16</span>
        </span>
        <span className={clsx(alarm, "mr-1 w-[15px] text-[11px]")}>CS</span>
        <span className={clsx(alarm, "mr-[3px] w-[54px]")} />
        <span className={clsx(cell, "mr-[3px] w-[55px]")} />
        <nav aria-label="Pages" className="flex items-start">
          <button type="button" className={clsx(tab, "w-[43px] font-bold")}>Page 1</button>
          <button type="button" className={clsx(tab, "w-[43px] font-bold")}>Page 2</button>
          <button type="button" className={clsx(tab, "mr-0.5 w-[43px] font-bold")}>Page 3</button>
          <button type="button" className={clsx(tab, "mr-0.5 w-[43px] text-[11px]")}>Page 4</button>
          <button type="button" className={clsx(tab, "w-[43px] text-[11px]")}>Page 5</button>
        </nav>
      </div>
    </footer>
  );
}

export default function App() {
  return (
    <div className="flex min-h-screen flex-col bg-black pr-2 font-['Open_Sans','Noto_Sans',sans-serif]">
      <TitleBar />
      <nav aria-label="Main menu" className="flex h-[21px] items-center gap-px border-b border-[#a8a8a8] bg-white text-[11px] text-[#222]">
        {menus.map((menu) => (
          <button key={menu} type="button" className="px-[7px] leading-5">
            {menu}
          </button>
        ))}
      </nav>
      <div className="flex h-[30px] border-b border-[#a0a0a0] bg-white">
        <div className="flex items-center border-r border-[#a8a8a8] bg-[#f0f0f0] pr-1 pl-1">
          <Toolbar tools={mainTools} label="Main toolbar" />
        </div>
      </div>
      <div className="flex h-[26px] items-center gap-1.5 border-b-2 border-[#80807c] bg-[#f0f0f0] pt-0.5 pl-2 font-['Liberation_Sans',Arial,sans-serif] text-[11px] text-[#222]">
        {userBar.map((item) => (
          <button
            key={item.label}
            type="button"
            className={clsx(
              item.width,
              "h-5 border-t border-r-2 border-b-2 border-l border-t-white border-r-[#808080] border-b-[#808080] border-l-white bg-[#f0f0f0] whitespace-nowrap",
            )}
          >
            {item.label}
          </button>
        ))}
      </div>
      <main className="flex flex-1 border-r-2 border-l-2 border-r-[#f0f0f0] border-l-[#777] bg-[#ababab]">
        <div className="flex w-[339px] shrink-0 flex-col pt-[13px]">
          <ConverterTests />
          <Legend />
          <MinimizedWindow />
        </div>
        <DacWindow />
      </main>
      <StatusBar />
      <div className="h-2 bg-linear-to-r from-[#4a2460] via-[#5a2f98] to-[#5a2070]" />
    </div>
  );
}
